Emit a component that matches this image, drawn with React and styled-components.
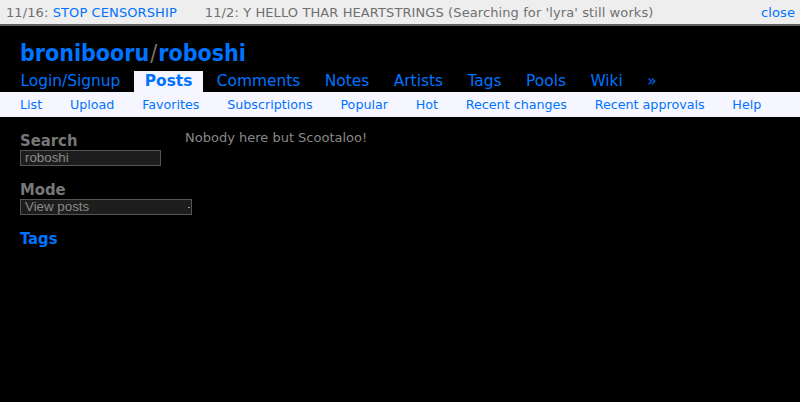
import React from "react";
import styled, { createGlobalStyle } from "styled-components";

const Global = createGlobalStyle`
  html, body { margin: 0; padding: 0; background: #000; }
  body {
    font-family: Verdana, "DejaVu Sans", sans-serif;
    font-size: 13px;
    color: #888;
  }
  a { text-decoration: none; }
`;

const BLUE = "#0073ff";
const HEAD_FONT = `Tahoma, "DejaVu Sans Condensed", "DejaVu Sans", sans-serif`;

const Page = styled.div`
  min-height: 402px;
  background: #000;
`;

const Notice = styled.div`
  display: flex;
  align-items: center;
  height: 24px;
  padding: 0 5px 0 6px;
  background: #eeeeee;
  border-bottom: 2px solid #5e5e5e;
  color: #707070;
  font-size: 13px;
  letter-spacing: 0.1px;
  white-space: nowrap;
`;

const NoticeItem = styled.span`
  margin-right: 28px;
`;

const Link = styled.a`
  color: ${BLUE};
  cursor: pointer;
`;

const Close = styled(Link)`
  margin-left: auto;
`;

const Header = styled.header`
  padding-top: 12px;
`;

const Title = styled.h1`
  margin: 0 0 0 20px;
  font-family: ${HEAD_FONT};
  font-size: 23px;
  line-height: 30px;
  font-weight: bold;
  color: ${BLUE};
`;

const Slash = styled.span`
  color: #7a746c;
  font-weight: normal;
  margin: 0 1px;
`;

const MainNav = styled.nav`
  display: flex;
  gap: 3.5px;
  padding-left: 10px;
  margin-top: 3px;
`;

const NavItem = styled.a`
  display: block;
  padding: 0 10.5px;
  height: 21px;
  line-height: 21px;
  font-size: 15.4px;
  color: ${BLUE};
  font-weight: ${(p) => (p.$active ? "bold" : "normal")};
  background: ${(p) => (p.$active ? "#f5f6ff" : "transparent")};
`;

const SubNav = styled.nav`
  display: flex;
  gap: 27.75px;
  align-items: center;
  height: 25px;
  padding-left: 20px;
  background: #f5f6ff;
`;

const SubItem = styled.a`
  color: ${BLUE};
  font-size: 12.7px;
`;

const Body = styled.div`
  display: flex;
  padding: 14px 0 0 20px;
`;

const Sidebar = styled.aside`
  width: 165px;
  flex-shrink: 0;
`;

const Section = styled.section`
  margin-bottom: 14px;
`;

const Heading = styled.h2`
  margin: 0;
  font-family: ${HEAD_FONT};
  font-size: 16.5px;
  line-height: 19px;
  font-weight: bold;
  color: ${(p) => (p.$blue ? BLUE : "#777")};
`;

const Field = styled.div`
  box-sizing: border-box;
  width: ${(p) => p.$w}px;
  height: 16px;
  background: #1d1d1d;
  border: 1px solid #555;
  color: #8a8a8a;
  font-family: Arial, "Liberation Sans", sans-serif;
  font-size: 13.33px;
  line-height: 14px;
  padding-left: 4px;
  position: relative;
`;

const Arrow = styled.span`
  position: absolute;
  right: 1px;
  top: 7px;
  width: 2px;
  height: 1px;
  background: #999;
`;

const Main = styled.main`
  line-height: 12px;
  color: #888;
  padding-top: 1px;
`;

export default function App() {
  return (
    <Page>
      <Global />
      <Notice>
        <NoticeItem>
          11/16: <Link>STOP CENSORSHIP</Link>
        </NoticeItem>
        <NoticeItem>11/2: Y HELLO THAR HEARTSTRINGS (Searching for 'lyra' still works)</NoticeItem>
        <Close>close</Close>
      </Notice>
      <Header>
        <Title>
          bronibooru<Slash>/</Slash>roboshi
        </Title>
        <MainNav>
          <NavItem>Login/Signup</NavItem>
          <NavItem $active>Posts</NavItem>
          <NavItem>Comments</NavItem>
          <NavItem>Notes</NavItem>
          <NavItem>Artists</NavItem>
          <NavItem>Tags</NavItem>
          <NavItem>Pools</NavItem>
          <NavItem>Wiki</NavItem>
          <NavItem>»</NavItem>
        </MainNav>
        <SubNav>
          <SubItem>List</SubItem>
          <SubItem>Upload</SubItem>
          <SubItem>Favorites</SubItem>
          <SubItem>Subscriptions</SubItem>
          <SubItem>Popular</SubItem>
          <SubItem>Hot</SubItem>
          <SubItem>Recent changes</SubItem>
          <SubItem>Recent approvals</SubItem>
          <SubItem>Help</SubItem>
        </SubNav>
      </Header>
      <Body>
        <Sidebar>
          <Section>
            <Heading>Search</Heading>
            <Field $w={141}>roboshi</Field>
          </Section>
          <Section>
            <Heading>Mode</Heading>
            <Field $w={172}>
              View posts
              <Arrow />
            </Field>
          </Section>
          <Section>
            <Heading $blue>Tags</Heading>
          </Section>
        </Sidebar>
        <Main>Nobody here but Scootaloo!</Main>
      </Body>
    </Page>
  );
}
